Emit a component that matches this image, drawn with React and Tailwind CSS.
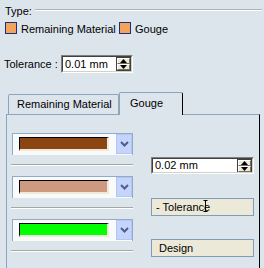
function Spinner({ className = "" }) {
  const Btn = ({ up }) => (
    <div className="flex-1 flex items-center justify-center bg-[#ece9d8] border-t border-l border-t-white border-l-white border-b border-r border-b-[#716f64] border-r-[#716f64]">
      <svg width="7" height="4" viewBox="0 0 7 4">
        {up ? <polygon points="3.5,0 7,4 0,4" fill="#000" /> : <polygon points="0,0 7,0 3.5,4" fill="#000" />}
      </svg>
    </div>
  );
  return (
    <div className={"flex flex-col w-[15px] border border-[#404040] " + className}>
      <Btn up />
      <Btn />
    </div>
  );
}

function NumInput({ value, w }) {
  return (
    <div className={"flex items-stretch bg-white border-t border-l border-t-[#808080] border-l-[#808080] border-b border-r border-b-white border-r-white " + w}>
      <div className="flex flex-1 items-center border-t border-l border-t-[#404040] border-l-[#404040] border-b border-r border-b-[#d4d0c8] border-r-[#d4d0c8] pr-[0px]">
        <span className="pl-[2px] flex-1">{value}</span>
        <Spinner className="h-full" />
      </div>
    </div>
  );
}

function ColorCombo({ color }) {
  return (
    <div className="flex items-start w-[121px] h-[22px] border-t border-x border-[#93abc4] bg-[#f9fafc]">
      <div
        className="mt-[3px] ml-[6px] w-[90px] h-[14px] border-t border-l border-t-black border-l-black border-b-2 border-r-2 border-b-[#efe9d6] border-r-[#efe9d6]"
        style={{ backgroundColor: color }}
      />
      <div className="ml-[7px] w-[16px] h-[20px] flex items-center justify-center bg-[#c4d4fc] border border-[#b3c6f2]">
        <svg width="9" height="6" viewBox="0 0 9 6">
          <polyline points="1,1 4.5,4.5 8,1" fill="none" stroke="#4d5f88" strokeWidth="2" />
        </svg>
      </div>
    </div>
  );
}

function Sep({ mt }) {
  return <div className={"-ml-[1px] w-[122px] h-[2px] border-t border-t-[#a5a89d] border-b border-b-white " + mt} />;
}

export default function App() {
  return (
    <div className="w-[264px] h-[268px] overflow-hidden bg-[#dde5ec] font-['Liberation_Sans',Arial,sans-serif] text-[11px] leading-[13px] text-black flex flex-col">
      {/* Type header */}
      <div className="flex items-start pt-[5px] pl-[5px] pr-[2px] h-[18px]">
        <span>Type:</span>
        <div className="flex-1 ml-[3px] mt-[4px] h-[2px] border-t border-t-[#aab3ba] border-b border-b-white" />
      </div>
      {/* Checkboxes */}
      <div className="flex items-start mt-[4px] pl-[5px] h-[14px]">
        <div className="flex items-start w-[114px]">
          <div className="w-[12px] h-[12px] border border-[#1c2f7c] bg-[#f4a35c]" />
          <span className="ml-[4px] mt-[1px]">Remaining Material</span>
        </div>
        <div className="flex items-start">
          <div className="w-[12px] h-[12px] border border-[#1c2f7c] bg-[#f4a35c]" />
          <span className="ml-[4px] mt-[1px]">Gouge</span>
        </div>
      </div>
      {/* Tolerance */}
      <div className="flex items-center mt-[19px] pl-[4px] h-[18px]">
        <span className="w-[57px]">Tolerance :</span>
        <NumInput value="0.01 mm" w="w-[72px] h-[18px]" />
      </div>
      {/* Tabs */}
      <div className="flex items-end mt-[19px] pl-[8px] h-[22px]">
        <div className="w-[111px] h-[20px] border-t border-x border-[#8ca5bf] rounded-t-[2px] pl-[8px] pt-[3px]">
          Remaining Material
        </div>
        <div className="relative z-10 w-[64px] h-[23px] -mb-[1px] bg-[#dde5ec] border-t border-l border-[#8ca5bf] border-r border-r-black rounded-t-[2px] pl-[10px] pt-[4px]">
          Gouge
        </div>
      </div>
      {/* Panel */}
      <div className="flex-1 ml-[6px] w-[254px] border-t border-l border-[#8ca5bf] border-r border-r-black flex">
        <div className="pl-[5px] pt-[18px] flex flex-col w-[127px]">
          <ColorCombo color="#8b4513" />
          <Sep mt="mt-[9px]" />
          <div className="mt-[10px]">
            <ColorCombo color="#cd9a80" />
          </div>
          <Sep mt="mt-[9px]" />
          <div className="mt-[10px]">
            <ColorCombo color="#00ff00" />
          </div>
          <Sep mt="mt-[9px]" />
        </div>
        <div className="ml-[17px] pt-[42px] flex flex-col w-[103px]">
          <NumInput value="0.02 mm" w="w-[103px] h-[17px]" />
          <div className="relative mt-[24px] h-[18px] flex items-center bg-[#ece9d8] border border-[#7f9db9] pl-[4px]">
            - Tolerance
            <svg className="absolute left-[51px] top-[1px]" width="5" height="12" viewBox="0 0 5 12">
              <path d="M0.5 0.5 H4.5 M2.5 0.5 V11.5 M0.5 11.5 H4.5" stroke="#000" strokeWidth="1" fill="none" />
            </svg>
          </div>
          <div className="mt-[23px] h-[18px] flex items-center bg-[#ece9d8] border border-[#7f9db9] pl-[7px]">
            Design
          </div>
        </div>
      </div>
    </div>
  );
}
